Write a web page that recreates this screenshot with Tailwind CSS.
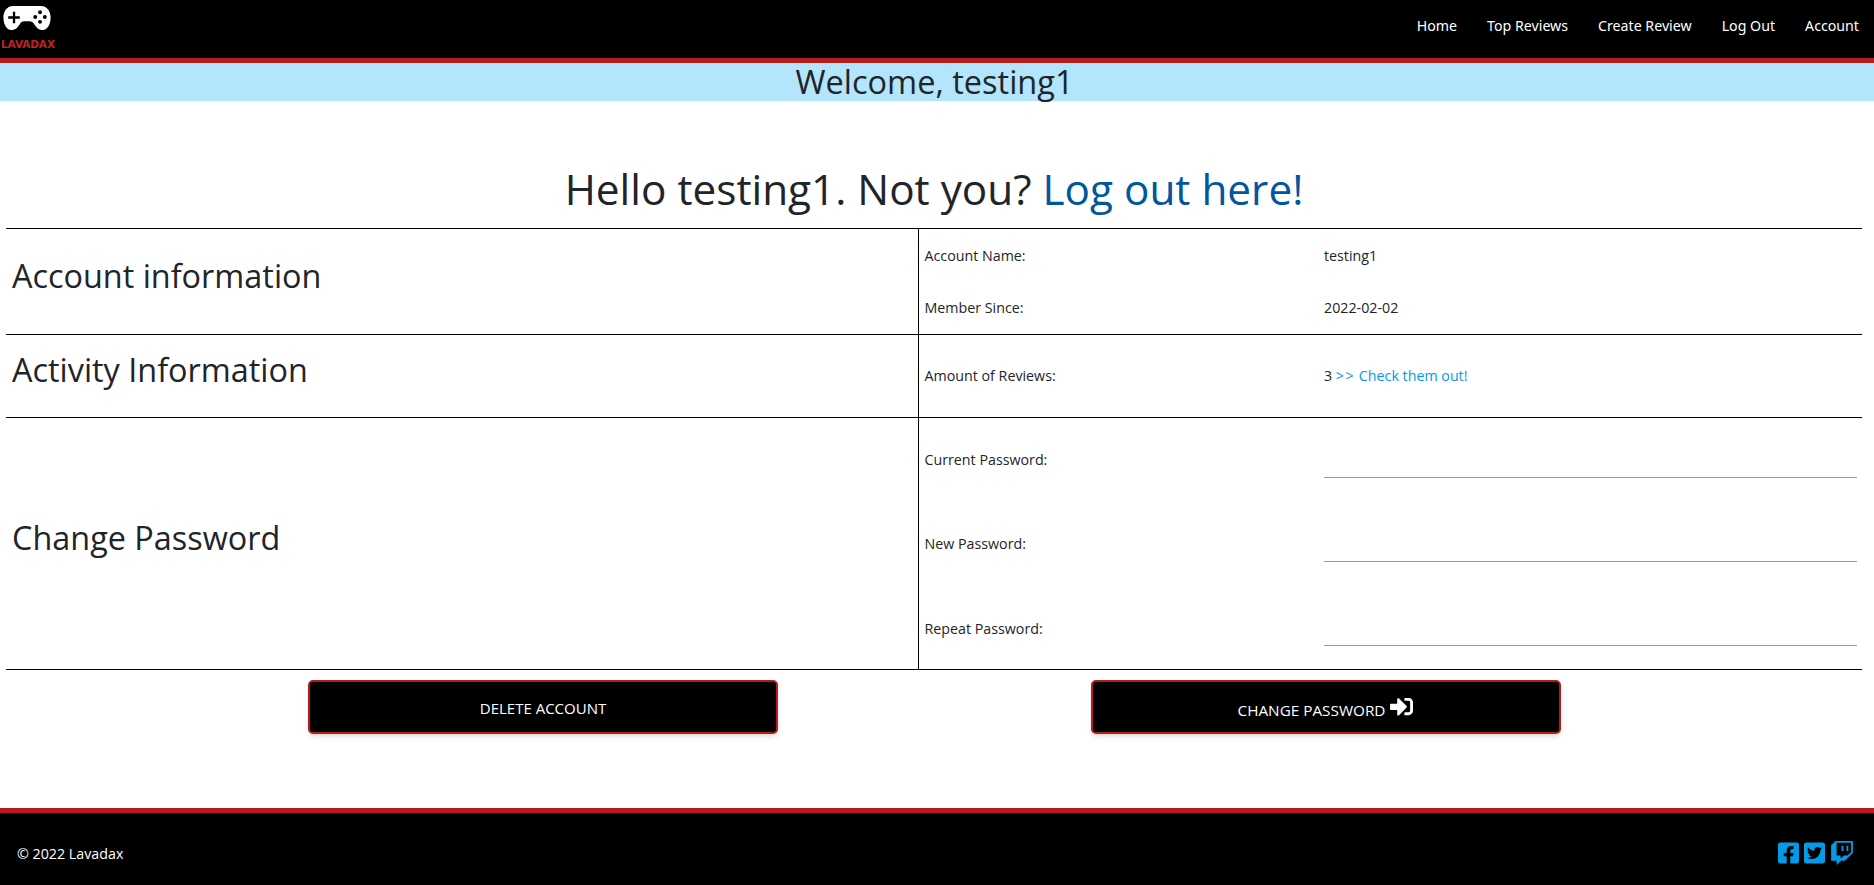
<!DOCTYPE html>
<html lang="en">
<head>
    <meta charset="UTF-8">
    <meta name="viewport" content="width=device-width, initial-scale=1.0">
    <title>Account - Lavadax</title>
    <script src="https://cdn.jsdelivr.net/npm/@tailwindcss/browser@4"></script>
</head>
<body class="bg-white font-['Open_Sans',sans-serif] text-[#212529] h-[885px] overflow-hidden flex flex-col">
    <!-- navbar -->
    <nav class="h-[63px] shrink-0 bg-black border-b-[5px] border-[#b71c1c] flex items-start justify-between">
        <a href="#" class="flex flex-col pl-[1px] pt-[5px] w-[56px]">
            <svg class="ml-[2px]" width="49" height="26" viewBox="0 0 50 27">
                <path fill="#fff" d="M10 1h29c6 0 10 5 10 12 0 8-4 13-8 13-5 0-7-3-9-6-1-2-3-3-5-3h-5c-3 0-4 1-5 3-2 3-4 6-9 6-4 0-8-5-8-13C0 6 4 1 10 1z"/>
                <path stroke="#000" stroke-width="2.400" d="M11 7v12M5 13h12"/>
                <circle cx="38" cy="7.500" r="2" fill="#000"/>
                <circle cx="38" cy="17.500" r="2" fill="#000"/>
                <circle cx="33" cy="12.500" r="2" fill="#000"/>
                <circle cx="43" cy="12.500" r="2" fill="#000"/>
            </svg>
            <span class="font-['DejaVu_Sans',sans-serif] font-bold text-[10.500px] leading-[12px] mt-[7px] text-[#c62020] tracking-[-0.1px]">LAVADAX</span>
        </a>
        <ul class="flex text-white text-[14.200px] leading-[20px] pt-[16px] pr-[15px] gap-[30px] font-['Noto_Sans',sans-serif]">
            <li><a href="#">Home</a></li>
            <li><a href="#">Top Reviews</a></li>
            <li><a href="#">Create Review</a></li>
            <li><a href="#">Log Out</a></li>
            <li><a href="#">Account</a></li>
        </ul>
    </nav>

    <h1 class="h-[38px] shrink-0 bg-[#b3e5fc] text-center text-[32.500px] leading-[38px] pr-[5px]">Welcome, testing1</h1>

    <main class="grow pl-[6px] pr-[12px]">
        <h2 class="text-center text-[42.300px] leading-[60px] mt-[58px] mb-[9px]">Hello testing1. Not you? <a href="#" class="text-[#01579b]">Log out here!</a></h2>

        <table class="w-full table-fixed border-collapse text-[14.250px]">
            <colgroup>
                <col class="w-[912px]">
                <col class="w-[401px]">
                <col>
            </colgroup>
            <tbody>
                <tr class="border-t border-black h-[53px]">
                    <td rowspan="2" class="border-r border-black pl-[6px] pr-[5px] text-[32.400px] pb-[12px]">Account information</td>
                    <td class="pl-[6px] pr-[5px]">Account Name:</td>
                    <td class="px-[5px]">testing1</td>
                </tr>
                <tr class="h-[53px]">
                    <td class="pl-[6px] pr-[5px]">Member Since:</td>
                    <td class="px-[5px]">2022-02-02</td>
                </tr>
                <tr class="border-t border-black h-[83px]">
                    <td class="border-r border-black pl-[6px] pr-[5px] text-[32.400px] pb-[14px]">Activity Information</td>
                    <td class="pl-[6px] pr-[5px]">Amount of Reviews:</td>
                    <td class="px-[5px]">3 <a href="#" class="text-[#039be5]"><span class="tracking-[1.500px]">&gt;&gt;</span> Check them out!</a></td>
                </tr>
                <tr class="border-t border-black h-[84px]">
                    <td rowspan="3" class="border-r border-black pl-[6px] pr-[5px] text-[32.400px] pb-[12px]">Change Password</td>
                    <td class="pl-[6px] pr-[5px]">Current Password:</td>
                    <td class="px-[5px]"><input type="password" class="w-full h-[36px] border-b border-[#9e9e9e] outline-none"></td>
                </tr>
                <tr class="h-[84px]">
                    <td class="pl-[6px] pr-[5px]">New Password:</td>
                    <td class="px-[5px]"><input type="password" class="w-full h-[36px] border-b border-[#9e9e9e] outline-none"></td>
                </tr>
                <tr class="h-[84px] border-b border-black">
                    <td class="pl-[6px] pr-[5px] pt-[2px]">Repeat Password:</td>
                    <td class="px-[5px] pt-[1px]"><input type="password" class="w-full h-[36px] border-b border-[#9e9e9e] outline-none"></td>
                </tr>
            </tbody>
        </table>

        <div class="flex mt-[10px] ml-[302px] gap-[313px]">
            <button class="w-[470px] h-[54px] bg-black text-white text-[15px] uppercase border-2 border-[#b71c1c] rounded-[5px] shadow-md pt-[3px]">Delete Account</button>
            <button class="w-[470px] h-[54px] bg-black text-white text-[15.300px] uppercase border-2 border-[#b71c1c] rounded-[5px] shadow-md pt-[7px] flex items-center justify-center gap-[4px]">
                Change Password
                <svg class="w-[25px] h-[23px] mb-[8px]" viewBox="0 0 512 512" fill="#fff"><path d="M416 448h-84c-6.600 0-12-5.400-12-12v-40c0-6.600 5.400-12 12-12h84c17.700 0 32-14.300 32-32V160c0-17.700-14.300-32-32-32h-84c-6.600 0-12-5.400-12-12V76c0-6.600 5.400-12 12-12h84c53 0 96 43 96 96v192c0 53-43 96-96 96zm-47-201L201 79c-15-15-41-4.500-41 17v96H24c-13.300 0-24 10.700-24 24v96c0 13.300 10.700 24 24 24h136v96c0 21.500 26 32 41 17l168-168c9.300-9.400 9.300-24.600 0-34z"/></svg>
            </button>
        </div>
    </main>

    <!-- footer -->
    <footer class="h-[77px] shrink-0 bg-black border-t-[5px] border-[#b71c1c] flex items-center justify-between pl-[17px] pr-[20px] text-white text-[14.250px]">
        <span class="pt-[9px]">© 2022 Lavadax</span>
        <div class="flex items-center gap-[5px] text-[#039be5] pt-[8px]">
            <svg class="w-[21px] h-[24px]" viewBox="0 0 448 512" fill="currentColor"><path d="M400 32H48A48 48 0 0 0 0 80v352a48 48 0 0 0 48 48h137.250V327.690h-63V256h63v-54.640c0-62.150 37-96.480 93.670-96.480 27.140 0 55.520 4.840 55.520 4.840v61h-31.270c-30.810 0-40.420 19.120-40.420 38.730V256h68.780l-11 71.690h-57.780V480H400a48 48 0 0 0 48-48V80a48 48 0 0 0-48-48z"/></svg>
            <svg class="w-[21px] h-[24px]" viewBox="0 0 448 512" fill="currentColor"><path d="M400 32H48C21.500 32 0 53.500 0 80v352c0 26.500 21.500 48 48 48h352c26.500 0 48-21.500 48-48V80c0-26.500-21.500-48-48-48zm-48.900 158.800c.2 2.800.2 5.700.2 8.500 0 86.700-66 186.600-186.600 186.600-37.200 0-71.700-10.800-100.700-29.400 5.300.6 10.400.8 15.800.8 30.700 0 58.900-10.400 81.400-28-28.800-.6-53-19.500-61.300-45.500 10.100 1.500 19.200 1.500 29.600-1.200-30-6.100-52.500-32.500-52.500-64.400v-.8c8.700 4.900 18.900 7.900 29.600 8.300a65.447 65.447 0 0 1-29.200-54.600c0-12.200 3.200-23.400 8.900-33.100 32.300 39.800 80.800 65.800 135.200 68.600-9.300-44.500 24-80.600 64-80.600 18.900 0 35.900 7.900 47.900 20.700 14.800-2.800 29-8.300 41.600-15.800-4.900 15.200-15.100 28-28.600 36 13.100-1.400 25.800-5.100 37.500-10.200-8.900 13.100-20.100 24.700-32.900 34z"/></svg>
            <svg class="w-[24px] h-[24px]" viewBox="0 0 512 512" fill="currentColor"><path d="M391.170 103.470H352.540v109.700h38.630ZM285 103H246.370V212.750H285ZM120.830 0 24.310 91.420V420.580H140.140V512l96.530-91.420h77.250L487.690 256V0ZM449.070 237.750l-77.220 73.120H294.610l-67.600 64v-64H140.140V36.580H449.070Z"/></svg>
        </div>
    </footer>
</body>
</html>
